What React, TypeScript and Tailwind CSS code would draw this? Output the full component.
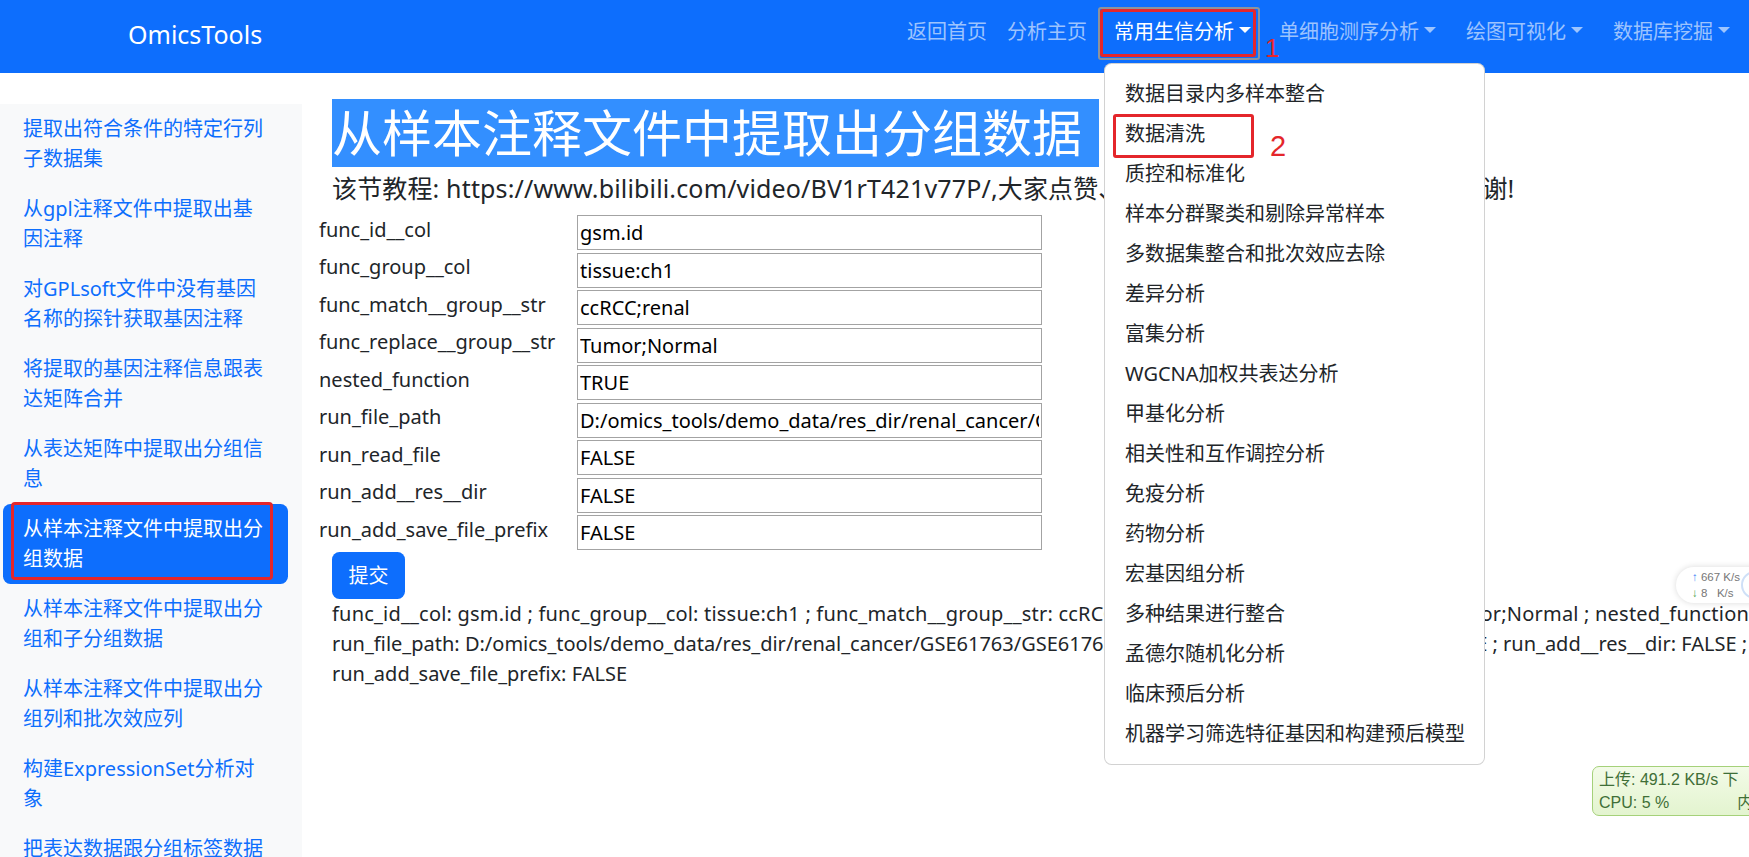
import React from "react";

const sideItems = [
  "提取出符合条件的特定行列子数据集",
  "从gpl注释文件中提取出基因注释",
  "对GPLsoft文件中没有基因名称的探针获取基因注释",
  "将提取的基因注释信息跟表达矩阵合并",
  "从表达矩阵中提取出分组信息",
  "从样本注释文件中提取出分组数据",
  "从样本注释文件中提取出分组和子分组数据",
  "从样本注释文件中提取出分组列和批次效应列",
  "构建ExpressionSet分析对象",
  "把表达数据跟分组标签数据合并",
];

const menuItems = [
  "数据目录内多样本整合",
  "数据清洗",
  "质控和标准化",
  "样本分群聚类和剔除异常样本",
  "多数据集整合和批次效应去除",
  "差异分析",
  "富集分析",
  "WGCNA加权共表达分析",
  "甲基化分析",
  "相关性和互作调控分析",
  "免疫分析",
  "药物分析",
  "宏基因组分析",
  "多种结果进行整合",
  "孟德尔随机化分析",
  "临床预后分析",
  "机器学习筛选特征基因和构建预后模型",
];

const fields: [string, string][] = [
  ["func_id__col", "gsm.id"],
  ["func_group__col", "tissue:ch1"],
  ["func_match__group__str", "ccRCC;renal"],
  ["func_replace__group__str", "Tumor;Normal"],
  ["nested_function", "TRUE"],
  ["run_file_path", "D:/omics_tools/demo_data/res_dir/renal_cancer/GSE61763/GSE61763_sample_anno.csv"],
  ["run_read_file", "FALSE"],
  ["run_add__res__dir", "FALSE"],
  ["run_add_save_file_prefix", "FALSE"],
];

function Caret() {
  return (
    <span className="inline-block w-0 h-0 ml-[5px] align-[0.255em] border-t-[6px] border-x-[6px] border-b-0 border-t-current border-x-transparent" />
  );
}

export default function App() {
  return (
    <div className="relative w-[1749px] h-[857px] overflow-hidden bg-white text-[#212529] font-['Noto_Sans','Noto_Sans_CJK_SC',sans-serif]">
      {/* Navbar */}
      <div className="h-[73px] bg-[#0d6efd] flex items-center">
        <div className="pl-[128px] pb-[5px] text-[25px] leading-[30px] text-white">OmicsTools</div>
        <div className="ml-auto pr-[19px] pb-[10px] flex items-center text-[20px] leading-[30px] text-[rgba(255,255,255,0.6)]">
          <span>返回首页</span>
          <span className="ml-[20px]">分析主页</span>
          <span className="ml-[27px] text-white">
            常用生信分析
            <Caret />
          </span>
          <span className="ml-[28px]">
            单细胞测序分析
            <Caret />
          </span>
          <span className="ml-[30px]">
            绘图可视化
            <Caret />
          </span>
          <span className="ml-[30px]">
            数据库挖掘
            <Caret />
          </span>
        </div>
      </div>

      {/* Body */}
      <div className="flex h-[784px]">
        <div className="w-[302px] mt-[31px] bg-[#f8f9fa] pl-[3px] pr-[14px] shrink-0">
          {sideItems.map((t, i) => (
            <div
              key={i}
              className={
                "px-[20px] py-[10px] text-[20px] leading-[30px] rounded-[7.5px] " +
                (i === 5 ? "bg-[#0d6efd] text-white" : "text-[#0d6efd]")
              }
            >
              {t}
            </div>
          ))}
        </div>

        <div className="flex-1 pl-[30px] pt-[30px] min-w-0">
          <h1 className="text-[50px] leading-[60px] font-normal mb-[10px] whitespace-nowrap">
            <span className="bg-[#338fff] text-white pr-[17px]">从样本注释文件中提取出分组数据</span>
          </h1>
          <div className="text-[25px] leading-[30px] mb-[10px] whitespace-nowrap tracking-[0.15px]">
            该节教程: https://www.bilibili.com/video/BV1rT421v77P/,大家点赞、投币、收藏、转发,多多支持，谢谢!
          </div>

          <div className="-ml-[13px] pt-[2px] flex flex-col gap-[2.5px]">
            {fields.map(([k, v]) => (
              <div key={k} className="flex items-center h-[35px]">
                <div className="w-[258px] text-[20px] leading-[30px] pb-[6px] whitespace-nowrap">{k}</div>
                <input
                  readOnly
                  defaultValue={v}
                  className="w-[465px] h-[35px] border-[1.5px] border-[#a3a3a3] px-[2px] text-[20px] text-black bg-white outline-none"
                />
              </div>
            ))}
          </div>

          <button className="mt-[2px] w-[73px] h-[47px] rounded-[7.5px] bg-[#0d6efd] text-white text-[20px] leading-[30px]">
            提交
          </button>

          <div className="text-[20px] leading-[30px] whitespace-nowrap">
            <div className="tracking-[0.2px]">
              func_id__col: gsm.id ; func_group__col: tissue:ch1 ; func_match__group__str: ccRCC;renal ; func_replace__group__str: Tumor;Normal ; nested_function: TRUE ;
            </div>
            <div>
              run_file_path: D:/omics_tools/demo_data/res_dir/renal_cancer/GSE61763/GSE61763_sample_anno.csv ; run_read_file: FALSE ; run_add__res__dir: FALSE ;
            </div>
            <div>run_add_save_file_prefix: FALSE</div>
          </div>
        </div>
      </div>

      {/* Dropdown menu */}
      <div className="absolute left-[1104px] top-[63px] w-[381px] bg-white border border-[rgba(0,0,0,0.175)] rounded-[7.5px] py-[10px]">
        {menuItems.map((t) => (
          <div key={t} className="px-[20px] py-[5px] text-[20px] leading-[30px] text-[#212529] whitespace-nowrap">
            {t}
          </div>
        ))}
      </div>

      {/* Annotation boxes */}
      <div className="absolute left-[1098px] top-[7px] w-[162px] h-[53px] border-2 border-[#8d939c] rounded-[3px]" />
      <div className="absolute left-[1100px] top-[9px] w-[156px] h-[48px] border-[3px] border-[#e4262b] rounded-[3px]" />
      <div className="absolute left-[1265px] top-[33px] text-[26px] leading-[30px] text-[#e4262b] font-['Liberation_Sans',sans-serif]">1</div>

      <div className="absolute left-[1113px] top-[114px] w-[141px] h-[44px] border-[3px] border-[#e4262b] rounded-[3px]" />
      <div className="absolute left-[1270px] top-[131px] text-[29px] leading-[30px] text-[#e4262b] font-['Liberation_Sans',sans-serif]">2</div>

      <div className="absolute left-[11px] top-[502px] w-[262px] h-[78px] border-[3px] border-[#e4262b] rounded-[4px]" />

      {/* Net speed bubble */}
      <div className="absolute left-[1676px] top-[567px] w-[100px] h-[36px] bg-white rounded-full shadow-[0_0_6px_rgba(0,0,0,0.15)] pl-[16px] pt-[2px] text-[11.5px] leading-[16px] text-[#777] font-['Liberation_Sans',sans-serif] whitespace-nowrap">
        <div><span className="text-[#3b82f6]">↑</span> 667 K/s</div>
        <div><span className="text-[#43a047]">↓</span> 8&nbsp;&nbsp; K/s</div>
      </div>
      <div className="absolute left-[1741px] top-[571px] w-[28px] h-[28px] rounded-full border-2 border-[#cfe0f7] bg-white" />

      {/* System monitor box */}
      <div className="absolute left-[1592px] top-[766px] w-[190px] h-[50px] rounded-[7px] border-[1.5px] border-[#a5d17a] bg-gradient-to-b from-[#f3fbe8] to-[#e3f4cf] pl-[6px] pt-[1px] text-[16px] leading-[23px] text-[#3f6f37] font-['Liberation_Sans','Noto_Sans_CJK_SC',sans-serif] whitespace-nowrap">
        <div>上传: 491.2 KB/s 下</div>
        <div>CPU: 5 %<span className="inline-block w-[68px]" />内</div>
      </div>
    </div>
  );
}
